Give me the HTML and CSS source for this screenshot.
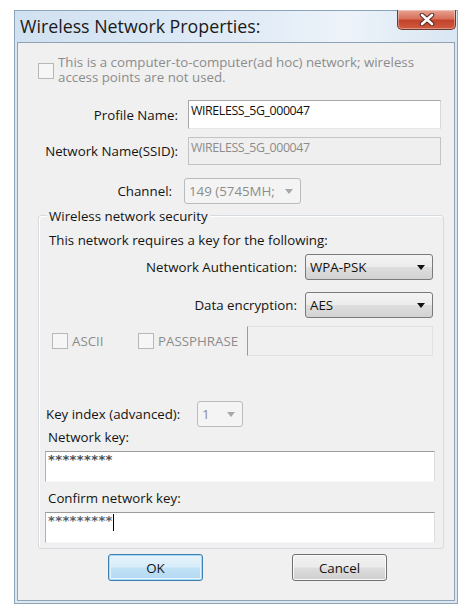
FILE: index.html
```html
<!DOCTYPE html>
<html>
<head>
<meta charset="utf-8">
<link rel="stylesheet" href="styles.css">
</head>
<body>
<div class="window">
  <div class="titlebar">
    <span class="title">Wireless Network Properties:</span>
    <div class="close">
      <svg width="20" height="13" viewBox="0 0 20 13"><path d="M5 2 L15 11 M15 2 L5 11" stroke="#5a2a22" stroke-width="4.6" stroke-linecap="round"/><path d="M5 2 L15 11 M15 2 L5 11" stroke="#ffffff" stroke-width="2.6" stroke-linecap="round"/></svg>
    </div>
  </div>
  <div class="client">
    <div class="adhoc">
      <span class="cb disabled"></span>
      <span class="adhoc-text">This is a computer-to-computer(ad hoc) network; wireless access points are not used.</span>
    </div>

    <div class="row row-profile">
      <span class="label">Profile Name:</span>
      <div class="edit">WIRELESS_5G_000047</div>
    </div>
    <div class="row row-ssid">
      <span class="label">Network Name(SSID):</span>
      <div class="edit edit-disabled">WIRELESS_5G_000047</div>
    </div>
    <div class="row row-channel">
      <span class="label label-channel">Channel:</span>
      <div class="combo combo-disabled combo-channel"><span class="combo-text">149 (5745MH;</span><span class="arrow arrow-gray"></span></div>
    </div>

    <div class="group">
      <div class="legend">Wireless network security</div>
      <div class="group-line">This network requires a key for the following:</div>
      <div class="srow srow-auth">
        <span class="slabel">Network Authentication:</span>
        <div class="combo combo-wide"><span class="combo-text">WPA-PSK</span><span class="arrow"></span></div>
      </div>
      <div class="srow srow-enc">
        <span class="slabel">Data encryption:</span>
        <div class="combo combo-wide"><span class="combo-text">AES</span><span class="arrow"></span></div>
      </div>
      <div class="checks">
        <label class="check check-ascii"><span class="cb disabled"></span><span class="dis-text">ASCII</span></label>
        <label class="check check-pass"><span class="cb disabled"></span><span class="dis-text">PASSPHRASE</span></label>
        <div class="pass-box"></div>
      </div>
      <div class="keyindex">
        <span class="keyindex-label">Key index (advanced):</span>
        <div class="combo combo-disabled combo-key"><span class="combo-text">1</span><span class="arrow arrow-gray"></span></div>
      </div>
      <div class="klabel klabel-first">Network key:</div>
      <div class="keybox"><span class="stars">*********</span></div>
      <div class="klabel">Confirm network key:</div>
      <div class="keybox"><span class="stars stars-color">*********</span><span class="caret"></span></div>
    </div>

    <div class="buttons">
      <div class="btn btn-ok">OK</div>
      <div class="btn btn-cancel">Cancel</div>
    </div>
  </div>
</div>
</body>
</html>
```

FILE: styles.css
```css
* { box-sizing: border-box; }
html, body { margin: 0; padding: 0; background: #ffffff; }
body {
  font-family: "Open Sans", "Noto Sans", "Liberation Sans", sans-serif;
  font-size: 13.3px;
  color: #141414;
}
.window {
  margin: 10px 0 0 14px;
  width: 444px;
  height: 594px;
  border: 1px solid #8ea4ba;
  background: #dce7f2;
  display: flex;
  flex-direction: column;
  padding: 0 2px 2px 2px;
}
.titlebar {
  height: 31px;
  flex: none;
  display: flex;
  justify-content: space-between;
  align-items: flex-start;
  background: linear-gradient(to right, #d0e1f1 0%, #e2ecf7 55%, #edf3f9 75%, #d9e6f3 100%);
  margin: 0 -2px;
  padding: 0 1px 0 5px;
}
.title {
  font-size: 17.8px;
  line-height: 29px;
  color: #1a1a1a;
  padding-top: 1px;
}
.close {
  width: 59px;
  height: 20px;
  margin-top: -1px;
  border: 1px solid #6d3a30;
  border-top: none;
  border-radius: 0 0 5px 5px;
  background: linear-gradient(to bottom, #e9a493 0%, #d7715c 45%, #c4432c 55%, #cf5a3e 100%);
  display: flex;
  align-items: center;
  justify-content: center;
  box-shadow: inset 0 0 0 1px rgba(255,255,255,0.35);
}
.client {
  flex: 1;
  border: 1px solid #8ea2b6;
  background: #f0f0f0;
  display: flex;
  flex-direction: column;
}
.cb {
  display: inline-block;
  width: 16px;
  height: 16px;
  flex: none;
  border: 1px solid #8f8f8f;
  background: #ffffff;
}
.cb.disabled {
  border-color: #b8b8b8;
  background: #f6f6f6;
}
.adhoc {
  display: flex;
  align-items: flex-start;
  margin: 12px 0 0 20px;
  height: 32px;
}
.adhoc .cb { margin-top: 8px; }
.adhoc-text {
  margin-left: 4px;
  width: 380px;
  line-height: 14.5px;
  color: #8c8c8c;
}
.row {
  display: flex;
  align-items: center;
}
.label {
  width: 160px;
  text-align: right;
  flex: none;
}
.label-channel { width: 154px; }
.row-profile { margin-top: 13px; height: 29px; }
.row-ssid { margin-top: 8px; height: 28px; }
.row-channel { margin-top: 13px; height: 26px; }
.edit {
  margin-left: 10px;
  width: 253px;
  height: 100%;
  background: #ffffff;
  border: 1px solid #a6a6a6;
  border-right-color: #d8d8d8;
  border-bottom-color: #e6e6e6;
  padding: 1px 0 0 2px;
  font-size: 12.4px;
  letter-spacing: -0.4px;
  line-height: 17px;
  color: #111111;
}
.edit-disabled {
  background: #efefef;
  border-color: #c4c4c4;
  color: #8c8c8c;
}
.combo {
  height: 100%;
  border: 1px solid #7a7a7a;
  border-radius: 3px;
  background: linear-gradient(to bottom, #f4f4f4 0%, #ececec 48%, #dedede 52%, #d2d2d2 100%);
  display: flex;
  align-items: center;
  padding-left: 4px;
  color: #111111;
}
.combo-text { flex: 1; white-space: nowrap; overflow: hidden; }
.combo-disabled {
  border-color: #b8bcc0;
  background: #f4f4f4;
  color: #8c8c8c;
}
.combo-channel { margin-left: 12px; width: 117px; }
.arrow {
  flex: none;
  width: 0;
  height: 0;
  border-left: 4px solid transparent;
  border-right: 4px solid transparent;
  border-top: 5px solid #111111;
  margin: 0 7px 0 4px;
}
.arrow-gray { border-top-color: #a8a8a8; }
.group {
  margin: 11px 0 0 20px;
  width: 406px;
  border: 1px solid #d5dbe1;
  border-radius: 3px;
  box-shadow: inset 1px 1px 0 #ffffff;
  padding-bottom: 5px;
}
.legend {
  display: block;
  width: fit-content;
  margin: -8px 0 0 8px;
  padding: 0 2px;
  line-height: 16px;
  background: #f0f0f0;
}
.group-line {
  margin: 8px 0 0 10px;
  line-height: 16px;
}
.srow {
  display: flex;
  justify-content: flex-end;
  align-items: center;
  height: 26px;
  padding-right: 10px;
}
.srow-auth { margin-top: 6px; }
.srow-enc { margin-top: 12px; }
.slabel { margin-right: 8px; }
.combo-wide { width: 128px; }
.checks {
  display: flex;
  align-items: center;
  margin-top: 8px;
  height: 30px;
  padding-left: 13px;
}
.check {
  display: flex;
  align-items: center;
  flex: none;
}
.check-ascii { width: 86px; }
.check-pass { width: 109px; }
.dis-text { margin-left: 4px; color: #8c8c8c; }
.pass-box {
  width: 186px;
  height: 100%;
  border: 1px solid #e2e2e2;
  border-left-color: #9a9a9a;
  background: #f0f0f0;
}
.keyindex {
  display: flex;
  align-items: center;
  margin-top: 45px;
  height: 26px;
  padding-left: 7px;
}
.keyindex-label { width: 151px; flex: none; }
.combo-key { width: 46px; }
.klabel {
  margin: 8px 0 0 9px;
  line-height: 16px;
}
.klabel-first { margin-top: 2px; }
.keybox {
  margin: 6px 0 0 6px;
  width: 390px;
  height: 31px;
  background: #ffffff;
  border: 1px solid #b0b0b0;
  border-top-color: #9c9c9c;
  border-right-color: #dedede;
  border-bottom-color: #f6f6f6;
  display: flex;
  align-items: flex-start;
  padding: 1px 0 0 2px;
}
.stars {
  font-family: "DejaVu Sans", sans-serif;
  font-size: 13px;
  line-height: 14px;
  letter-spacing: 0.4px;
  color: #4a4f55;
  font-weight: bold;
}
.stars-color { color: #56606a; }
.caret {
  display: inline-block;
  width: 1px;
  height: 17px;
  background: #000000;
  margin-left: 0;
}
.buttons {
  display: flex;
  margin: 5px 0 0 90px;
  gap: 89px;
}
.btn {
  width: 95px;
  height: 27px;
  border: 1px solid #707070;
  border-radius: 3px;
  background: linear-gradient(to bottom, #f2f2f2 0%, #ebebeb 48%, #dddddd 52%, #cfcfcf 100%);
  display: flex;
  align-items: center;
  justify-content: center;
  box-shadow: inset 0 0 0 1px #fbfbfb;
}
.btn-ok {
  border-color: #3c7fb1;
  background: linear-gradient(to bottom, #e8f4fb 0%, #d6ecf9 48%, #c1e2f6 52%, #b2d8f1 100%);
  box-shadow: inset 0 0 0 1px #a8dcf5, inset 0 0 0 2px #e4f3fc;
}
```
